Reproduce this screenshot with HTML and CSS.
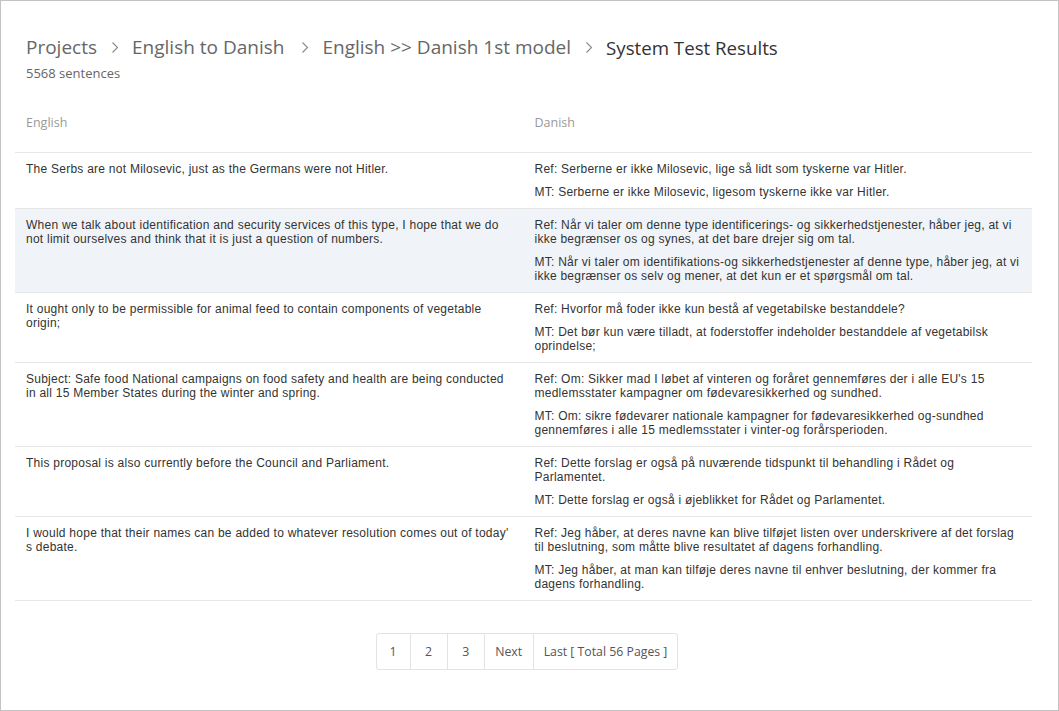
FILE: index.html
```html
<!DOCTYPE html>
<html lang="en">
<head>
<meta charset="utf-8">
<title>System Test Results</title>
<link rel="stylesheet" href="styles.css">
</head>
<body>
<div class="frame">
  <div class="page">
    <div class="head">
      <nav class="crumbs">
        <a class="crumb">Projects</a>
        <svg class="sep" width="8" height="13" viewBox="0 0 8 13"><path d="M1.5 1.5 L6.5 6.5 L1.5 11.5" fill="none" stroke="#888" stroke-width="1.1"/></svg>
        <a class="crumb">English to Danish</a>
        <svg class="sep sep-wide" width="8" height="13" viewBox="0 0 8 13"><path d="M1.5 1.5 L6.5 6.5 L1.5 11.5" fill="none" stroke="#888" stroke-width="1.1"/></svg>
        <a class="crumb">English &gt;&gt; Danish 1st model</a>
        <svg class="sep" width="8" height="13" viewBox="0 0 8 13"><path d="M1.5 1.5 L6.5 6.5 L1.5 11.5" fill="none" stroke="#888" stroke-width="1.1"/></svg>
        <span class="crumb current">System Test Results</span>
      </nav>
      <div class="count">5568 sentences</div>
    </div>

    <table class="results">
      <colgroup><col class="half"><col class="half"></colgroup>
      <thead>
        <tr><th>English</th><th>Danish</th></tr>
      </thead>
      <tbody>
        <tr>
          <td>The Serbs are not Milosevic, just as the Germans were not Hitler.</td>
          <td><p>Ref: Serberne er ikke Milosevic, lige så lidt som tyskerne var Hitler.</p><p>MT: Serberne er ikke Milosevic, ligesom tyskerne ikke var Hitler.</p></td>
        </tr>
        <tr class="hl">
          <td>When we talk about identification and security services of this type, I hope that we do not limit ourselves and think that it is just a question of numbers.</td>
          <td><p>Ref: Når vi taler om denne type identificerings- og sikkerhedstjenester, håber jeg, at vi ikke begrænser os og synes, at det bare drejer sig om tal.</p><p>MT: Når vi taler om identifikations-og sikkerhedstjenester af denne type, håber jeg, at vi ikke begrænser os selv og mener, at det kun er et spørgsmål om tal.</p></td>
        </tr>
        <tr>
          <td>It ought only to be permissible for animal feed to contain components of vegetable origin;</td>
          <td><p>Ref: Hvorfor må foder ikke kun bestå af vegetabilske bestanddele?</p><p>MT: Det bør kun være tilladt, at foderstoffer indeholder bestanddele af vegetabilsk oprindelse;</p></td>
        </tr>
        <tr>
          <td>Subject: Safe food National campaigns on food safety and health are being conducted in all 15 Member States during the winter and spring.</td>
          <td><p>Ref: Om: Sikker mad I løbet af vinteren og foråret gennemføres der i alle EU's 15 medlemsstater kampagner om fødevaresikkerhed og sundhed.</p><p>MT: Om: sikre fødevarer nationale kampagner for fødevaresikkerhed og-sundhed gennemføres i alle 15 medlemsstater i vinter-og forårsperioden.</p></td>
        </tr>
        <tr>
          <td>This proposal is also currently before the Council and Parliament.</td>
          <td><p>Ref: Dette forslag er også på nuværende tidspunkt til behandling i Rådet og Parlamentet.</p><p>MT: Dette forslag er også i øjeblikket for Rådet og Parlamentet.</p></td>
        </tr>
        <tr>
          <td>I would hope that their names can be added to whatever resolution comes out of today' s debate.</td>
          <td><p>Ref: Jeg håber, at deres navne kan blive tilføjet listen over underskrivere af det forslag til beslutning, som måtte blive resultatet af dagens forhandling.</p><p>MT: Jeg håber, at man kan tilføje deres navne til enhver beslutning, der kommer fra dagens forhandling.</p></td>
        </tr>
      </tbody>
    </table>

    <div class="pager-wrap">
      <ul class="pager">
        <li><a>1</a></li>
        <li><a>2</a></li>
        <li><a>3</a></li>
        <li><a>Next</a></li>
        <li><a>Last [ Total 56 Pages ]</a></li>
      </ul>
    </div>
  </div>
</div>
</body>
</html>
```

FILE: styles.css
```css
html, body {
  margin: 0;
  padding: 0;
  background: #fff;
}
.frame {
  box-sizing: border-box;
  width: 1059px;
  height: 711px;
  border: 1px solid #c3c3c3;
  overflow: hidden;
}
.page {
  padding: 0 26px 0 14px;
}
.head {
  padding: 32px 0 0 11px;
  font-family: "Open Sans", "Segoe UI", sans-serif;
}
.crumbs {
  display: flex;
  align-items: center;
  height: 28px;
  font-size: 19px;
  color: #666;
}
.crumb {
  white-space: pre;
}
.crumb.current {
  color: #333;
  font-size: 18.7px;
}
.sep {
  margin: 1px 13px 0 14px;
}
.sep-wide {
  margin-left: 17px;
}
.count {
  margin-top: 3px;
  font-size: 13px;
  line-height: 18px;
  color: #666;
}
.results {
  width: 100%;
  table-layout: fixed;
  border-collapse: collapse;
  font-family: "Liberation Sans", Arial, sans-serif;
  font-size: 12px;
  letter-spacing: 0.25px;
  color: #333;
}
.half {
  width: 50%;
}
.results th {
  text-align: left;
  font-family: "Open Sans", "Segoe UI", sans-serif;
  font-weight: normal;
  font-size: 12.5px;
  letter-spacing: 0;
  line-height: 18px;
  color: #999;
  padding: 32px 11px 20px;
  border-bottom: 1px solid #e6e6e6;
}
.results td {
  vertical-align: top;
  padding: 9px 11px;
  line-height: 14px;
  border-bottom: 1px solid #e6e6e6;
}
.results tr.hl td {
  background: #f0f4f8;
}
.results p {
  margin: 0 0 9px;
}
.results p:last-child {
  margin-bottom: 0;
}
.pager-wrap {
  display: flex;
  justify-content: center;
  padding-top: 32px;
  padding-left: 8px;
}
.pager {
  display: flex;
  list-style: none;
  margin: 0;
  padding: 0;
  font-family: "Open Sans", "Segoe UI", sans-serif;
  font-size: 12.3px;
  color: #555;
}
.pager li a {
  display: block;
  padding: 8.5px 10px;
  line-height: 18px;
  border: 1px solid #e3e3e3;
  margin-left: -1px;
}
.pager li:first-child a {
  border-radius: 3px 0 0 3px;
  padding: 8.5px 13px;
}
.pager li:nth-child(2) a,
.pager li:nth-child(3) a {
  padding: 8.5px 14.5px;
}
.pager li:nth-child(4) a {
  padding: 8.5px 10.5px;
}
.pager li:last-child a {
  border-radius: 0 3px 3px 0;
}
```
